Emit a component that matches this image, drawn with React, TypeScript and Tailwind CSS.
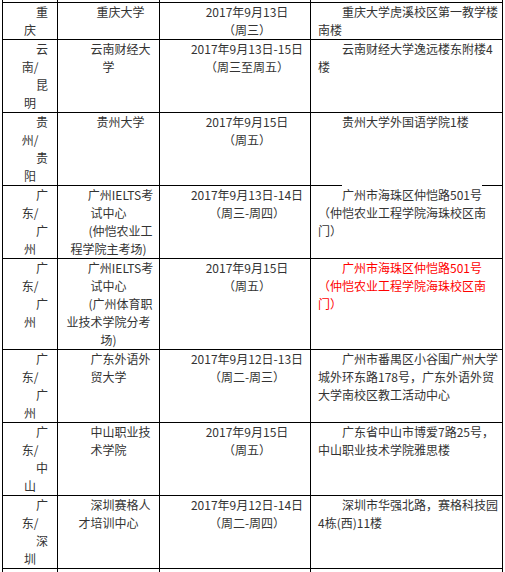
import type { ReactNode } from "react";

type Paragraph = string[];

interface ExamRow {
  place: Paragraph[];
  school: Paragraph[];
  date: string[];
  address: Paragraph;
  red?: boolean;
}

const ROWS: ExamRow[] = [
  {
    place: [["重", "庆"]],
    school: [["重庆大学"]],
    date: ["2017年9月13日", "（周三）"],
    address: ["重庆大学虎溪校区第一教学楼", "南楼"],
  },
  {
    place: [
      ["云", "南/"],
      ["昆", "明"],
    ],
    school: [["云南财经大", "学"]],
    date: ["2017年9月13日-15日", "（周三至周五）"],
    address: ["云南财经大学逸远楼东附楼4", "楼"],
  },
  {
    place: [
      ["贵", "州/"],
      ["贵", "阳"],
    ],
    school: [["贵州大学"]],
    date: ["2017年9月15日", "（周五）"],
    address: ["贵州大学外国语学院1楼"],
  },
  {
    place: [
      ["广", "东/"],
      ["广", "州"],
    ],
    school: [
      ["广州IELTS考", "试中心"],
      ["(仲恺农业工", "程学院主考场)"],
    ],
    date: ["2017年9月13日-14日", "（周三-周四）"],
    address: ["广州市海珠区仲恺路501号", "（仲恺农业工程学院海珠校区南", "门）"],
  },
  {
    place: [
      ["广", "东/"],
      ["广", "州"],
    ],
    school: [
      ["广州IELTS考", "试中心"],
      ["(广州体育职", "业技术学院分考", "场)"],
    ],
    date: ["2017年9月15日", "（周五）"],
    address: ["广州市海珠区仲恺路501号", "（仲恺农业工程学院海珠校区南", "门）"],
    red: true,
  },
  {
    place: [
      ["广", "东/"],
      ["广", "州"],
    ],
    school: [["广东外语外", "贸大学"]],
    date: ["2017年9月12日-13日", "（周二-周三）"],
    address: [
      "广州市番禺区小谷围广州大学",
      "城外环东路178号，广东外语外贸",
      "大学南校区教工活动中心",
    ],
  },
  {
    place: [
      ["广", "东/"],
      ["中", "山"],
    ],
    school: [["中山职业技", "术学院"]],
    date: ["2017年9月15日", "（周五）"],
    address: ["广东省中山市博爱7路25号，", "中山职业技术学院雅思楼"],
  },
  {
    place: [
      ["广", "东/"],
      ["深", "圳"],
    ],
    school: [["深圳赛格人", "才培训中心"]],
    date: ["2017年9月12日-14日", "（周二-周四）"],
    address: ["深圳市华强北路，赛格科技园", "4栋(西)11楼"],
  },
];

// first line of every paragraph carries a 2em indent, like the source page
const IndentedParagraph = ({ lines }: { lines: Paragraph }) => {
  return (
    <>
      {lines.map((line, i) => (
        <div key={line} className={i === 0 ? "whitespace-nowrap pl-6" : "whitespace-nowrap"}>
          {line}
        </div>
      ))}
    </>
  );
};

const Cell = ({ children, className = "" }: { children?: ReactNode; className?: string }) => {
  return <div className={`border-r border-b border-black ${className}`}>{children}</div>;
};

export default function App() {
  return (
    <main className="min-h-screen bg-white font-['Noto_Sans_CJK_SC',sans-serif] text-[12px] leading-[18px] text-[#333]">
      <div className="ml-[2px] grid w-[501px] grid-cols-[55px_102px_151px_192px] border-l border-black">
        {/* tail of the row above, cut off by the viewport */}
        <Cell className="h-[3px]" />
        <Cell className="h-[3px]" />
        <Cell className="h-[3px]" />
        <Cell className="h-[3px]" />

        {ROWS.map((row, r) => (
          <div key={r} className="contents">
            <Cell className="text-center">
              {row.place.map((p) => (
                <IndentedParagraph key={p.join("")} lines={p} />
              ))}
            </Cell>
            <Cell className="text-center">
              {row.school.map((p) => (
                <IndentedParagraph key={p.join("")} lines={p} />
              ))}
            </Cell>
            <Cell className="text-center">
              {row.date.map((line) => (
                <div key={line} className="whitespace-nowrap pl-6">
                  {line}
                </div>
              ))}
            </Cell>
            <Cell className={row.red ? "pl-[7px] text-[#f00]" : "pl-[7px]"}>
              {row.address.map((line, i) => (
                <div key={line} className={i === 0 ? "whitespace-nowrap pl-6" : "whitespace-nowrap"}>
                  {r === 3 && i === 0 ? <span className="bg-white pt-[3px]">{line}</span> : line}
                </div>
              ))}
            </Cell>
          </div>
        ))}

        {/* start of the next row */}
        <div className="h-[3px] border-r border-black" />
        <div className="h-[3px] border-r border-black" />
        <div className="h-[3px] border-r border-black" />
        <div className="h-[3px] border-r border-black" />
      </div>
    </main>
  );
}
